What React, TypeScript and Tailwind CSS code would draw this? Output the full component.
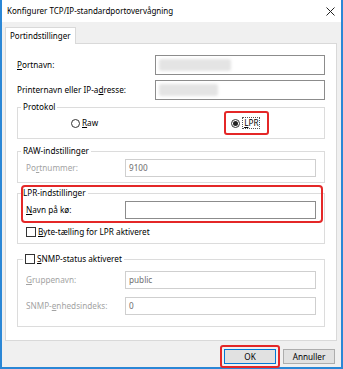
import type { ReactNode } from "react";

function Key({ children }: { children: ReactNode }) {
  return <span className="underline underline-offset-[1px]">{children}</span>;
}

function Blurred({ width }: { width: string }) {
  return <div className={`h-[12px] ${width} rounded-[2px] bg-[#e4e4e4] blur-[1.5px]`} />;
}

function Checkbox() {
  return <span className="h-[10px] w-[10px] shrink-0 border border-[#333] bg-white" />;
}

export default function App() {
  return (
    <div className="flex h-[369px] w-[343px] flex-col border-x-2 border-b-2 border-[#2b87d6] bg-[#f0f0f0] font-['Noto_Sans','Liberation_Sans',sans-serif] text-[8.2px] leading-[12px] text-black">
      {/* title bar */}
      <div className="flex h-[22px] shrink-0 items-center justify-between bg-white pl-[5px] pr-[6px]">
        <span className="text-[8px]">Konfigurer TCP/IP-standardportovervågning</span>
        <svg width="9" height="9" viewBox="0 0 9 9" className="mt-[1px]">
          <path d="M0.5 0.5 L8.5 8.5 M8.5 0.5 L0.5 8.5" stroke="#222" strokeWidth="1" />
        </svg>
      </div>

      <div className="flex flex-1 flex-col px-[3px] pt-[5px]">
        {/* tab */}
        <div className="flex">
          <div className="relative z-10 -mb-px flex h-[17px] items-center border border-b-0 border-[#d9d9d9] bg-white pl-[4px] pr-[5px] text-[8px]">
            Portindstillinger
          </div>
        </div>

        {/* tab panel */}
        <div className="mr-[1px] flex h-[298px] flex-col border border-[#d9d9d9] bg-white px-[11px] pt-[11px]">
          <div className="flex flex-col gap-[5px]">
            <div className="flex h-[20px] items-center justify-between">
              <span>
                <Key>P</Key>ortnavn:
              </span>
              <div className="flex h-[20px] w-[170px] items-center border border-[#8c8c8c] bg-white px-[3px]">
                <Blurred width="w-[72px]" />
              </div>
            </div>
            <div className="flex h-[20px] items-center justify-between">
              <span>
                Printernavn eller IP-a<Key>d</Key>resse:
              </span>
              <div className="flex h-[20px] w-[170px] items-center border border-[#8c8c8c] bg-white px-[3px]">
                <Blurred width="w-[59px]" />
              </div>
            </div>
          </div>

          {/* Protokol */}
          <fieldset className="mt-[1px] border border-[#dcdcdc] px-0">
            <legend className="ml-[3px] px-[2px]">Protokol</legend>
            <div className="flex h-[12px] items-center px-[8px] pb-[9px] pt-[4px] box-content">
              <div className="ml-[45px] flex items-center gap-[2px]">
                <span className="h-[9px] w-[9px] rounded-full border border-[#333] bg-white" />
                <span>
                  <Key>R</Key>aw
                </span>
              </div>
              <div className="ml-[126px] -my-[4px] flex items-center rounded-[3px] border-2 border-[#e42727] py-[4px] pl-[5px] pr-[7px]">
                <div className="flex items-center gap-[2px]">
                  <span className="flex h-[9px] w-[9px] items-center justify-center rounded-full border border-[#333] bg-white">
                    <span className="h-[5px] w-[5px] rounded-full bg-[#222]" />
                  </span>
                  <span className="border border-dotted border-[#555] px-[1px] leading-[10px]">
                    <Key>L</Key>PR
                  </span>
                </div>
              </div>
            </div>
          </fieldset>

          {/* RAW */}
          <fieldset className="mt-[6px] border border-[#dcdcdc] px-0 text-[#a3a3a3]">
            <legend className="ml-[3px] px-[2px] text-black">RAW-indstillinger</legend>
            <div className="flex items-center justify-between px-[8px] pb-[5px] pt-[2px]">
              <span>
                Po<Key>r</Key>tnummer:
              </span>
              <div className="flex h-[18px] w-[191px] items-center border border-[#cfcfcf] bg-white px-[3px] text-[#6d6d6d]">
                9100
              </div>
            </div>
          </fieldset>

          {/* LPR */}
          <div className="relative mt-[4px]">
            <fieldset className="border border-[#dcdcdc] px-0">
              <legend className="ml-[3px] px-[2px]">LPR-indstillinger</legend>
              <div className="px-[8px] pb-[5px] pt-[2px]">
                <div className="flex h-[18px] items-center justify-between">
                  <span>
                    <Key>N</Key>avn på kø:
                  </span>
                  <div className="h-[18px] w-[191px] border border-[#8c8c8c] bg-white" />
                </div>
                <div className="mt-[7px] flex h-[12px] items-center gap-[2px]">
                  <Checkbox />
                  <span>
                    <Key>B</Key>yte-tælling for LPR aktiveret
                  </span>
                </div>
              </div>
            </fieldset>
            {/* highlight */}
            <div className="pointer-events-none absolute left-[4px] right-[2px] -top-[2px] h-[38px] rounded-[4px] border-2 border-[#e42727]" />
          </div>

          {/* SNMP */}
          <fieldset className="mt-[9px] border border-[#dcdcdc] px-0 text-[#a3a3a3]">
            <legend className="ml-[5px] flex items-center gap-[2px] px-[2px] text-black">
              <Checkbox />
              <span>
                <Key>S</Key>NMP-status aktiveret
              </span>
            </legend>
            <div className="flex flex-col gap-[8px] px-[8px] pb-[11px] pt-[6px]">
              <div className="flex h-[18px] items-center justify-between">
                <span>
                  <Key>G</Key>ruppenavn:
                </span>
                <div className="flex h-[18px] w-[191px] items-center border border-[#cfcfcf] bg-white px-[3px] text-[#6d6d6d]">
                  public
                </div>
              </div>
              <div className="flex h-[18px] items-center justify-between">
                <span>
                  SNMP-<Key>e</Key>nhedsindeks:
                </span>
                <div className="flex h-[18px] w-[191px] items-center border border-[#cfcfcf] bg-white px-[3px] text-[#6d6d6d]">
                  0
                </div>
              </div>
            </div>
          </fieldset>
        </div>

        {/* buttons */}
        <div className="mt-[4px] flex items-center justify-end gap-[3px] pr-[3px]">
          <div className="rounded-[3px] border-2 border-[#e42727] p-[2px]">
            <button className="flex h-[15px] w-[52px] items-center justify-center border border-[#0078d7] bg-[#e1e1e1] text-[8.2px]">
              OK
            </button>
          </div>
          <button className="flex h-[15px] w-[52px] items-center justify-center border border-[#adadad] bg-[#e1e1e1] text-[8.2px]">
            Annuller
          </button>
        </div>
      </div>
    </div>
  );
}
